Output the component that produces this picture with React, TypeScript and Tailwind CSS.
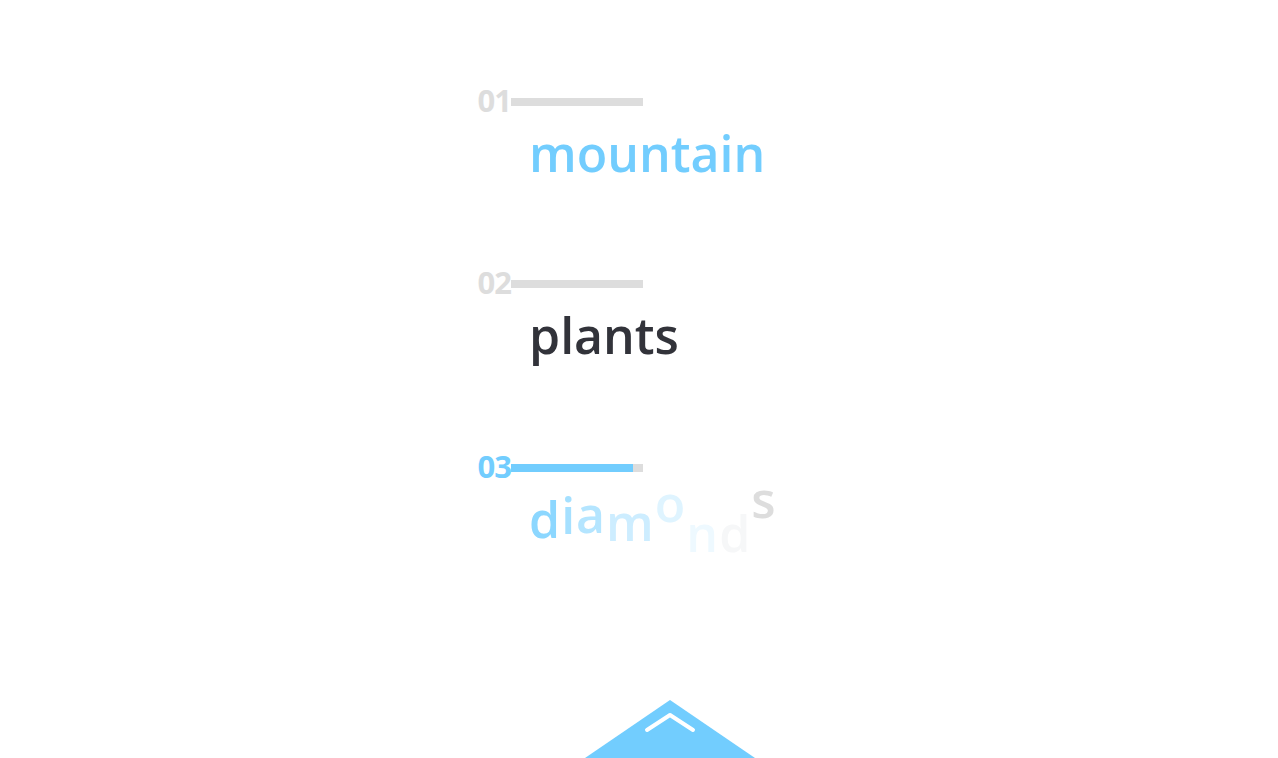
import React from "react";

const BLUE = "#72cdfe";

function Header({ num, active }: { num: string; active?: boolean }) {
  return (
    <div className="flex h-[32px] items-start">
      <div
        className={
          "w-[41px] text-right text-[31px] font-bold leading-[32px] tracking-[-1px] " +
          (active ? "text-[#72cdfe]" : "text-[#dddddd]")
        }
      >
        {num}
      </div>
      <div className="mt-[14px] flex h-[8px] w-[132px] bg-[#dddddd]">
        {active && <div className="h-full w-[122px] bg-[#72cdfe]" />}
      </div>
    </div>
  );
}

const letters: { ch: string; cls: string }[] = [
  { ch: "d", cls: "translate-y-0 text-[#8cd7ff]" },
  { ch: "i", cls: "-translate-y-[4px] text-[#a5e0ff]" },
  { ch: "a", cls: "-translate-y-[5px] text-[#b4e5ff]" },
  { ch: "m", cls: "translate-y-[3px] text-[#cdedff]" },
  { ch: "o", cls: "-translate-y-[16px] text-[#dff4ff]" },
  { ch: "n", cls: "translate-y-[14px] text-[#eef9ff]" },
  { ch: "d", cls: "translate-y-[14px] text-[#f6f7f8]" },
  { ch: "s", cls: "-translate-y-[20px] text-[#dddddd]" },
];

export default function App() {
  return (
    <div
      className="relative h-[758px] w-full overflow-hidden bg-white"
      style={{ fontFamily: '"Open Sans", "Noto Sans", sans-serif' }}
    >
      <div className="flex flex-col pl-[470px] pt-[84px]">
        <div className="h-[182px]">
          <Header num="01" />
          <div className="ml-[59px] mt-[12px] text-[50px] font-semibold leading-[51px] text-[#72cdfe]">
            mountain
          </div>
        </div>
        <div className="h-[184px]">
          <Header num="02" />
          <div className="ml-[59px] mt-[12px] text-[50px] font-semibold leading-[51px] text-[#32333a]">
            plants
          </div>
        </div>
        <div>
          <Header num="03" active />
          <div className="ml-[59px] mt-[12px] flex text-[50px] font-semibold leading-[51px] tracking-[1px]">
            {letters.map((l, i) => (
              <span key={i} className={"inline-block " + l.cls}>
                {l.ch}
              </span>
            ))}
          </div>
        </div>
      </div>
      <button className="absolute bottom-0 left-[585px] block h-[58px] w-[170px]">
        <svg width="170" height="58" viewBox="0 0 170 58">
          <polygon points="0,58 85,0 170,58" fill={BLUE} />
          <polyline
            points="62,30 85,15 108,30"
            fill="none"
            stroke="#ffffff"
            strokeWidth="4"
            strokeLinecap="round"
            strokeLinejoin="round"
          />
        </svg>
      </button>
    </div>
  );
}
